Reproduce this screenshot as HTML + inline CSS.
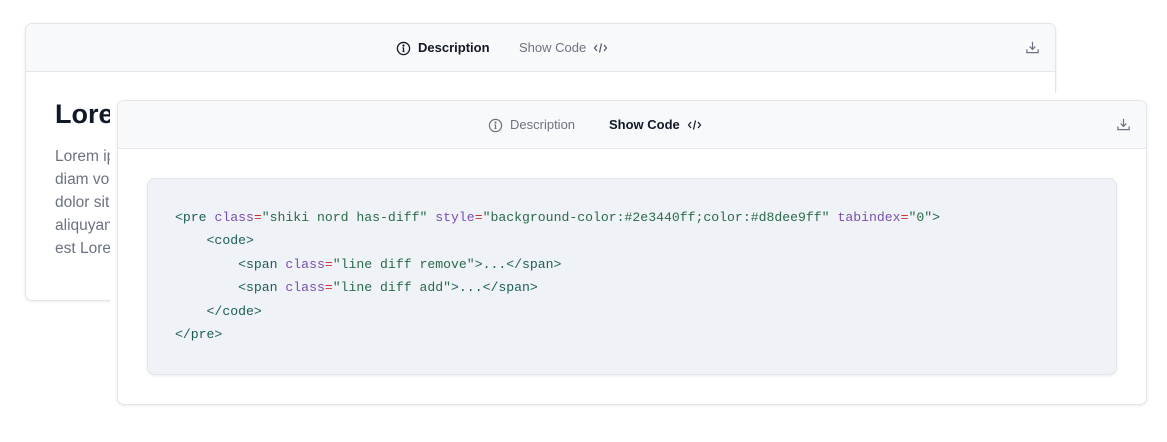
<!DOCTYPE html>
<html><head><style>
*{box-sizing:border-box;margin:0;padding:0}
body{width:1167px;height:442px;background:#fff;position:relative;overflow:hidden;font-family:"Liberation Sans",sans-serif}
.card{position:absolute;background:#fff;border:1px solid #e3e5e8;border-radius:7px;box-shadow:0 1px 3px rgba(0,0,0,.08);overflow:hidden}
.hdr{position:absolute;left:0;right:0;top:0;height:48px;background:#f8f9fa;border-bottom:1px solid #e5e7eb}
.tab{position:absolute;top:16px;font-size:13px;line-height:16px;color:#6b7280;display:flex;align-items:center;gap:7px;white-space:nowrap}
.tab.on{color:#111827;font-weight:bold}
.dl{position:absolute;top:16px}
pre{font-family:"Liberation Mono",monospace;font-size:13.15px;line-height:23.4px;color:#1d5f58}
.a{color:#7a4fb0}.e{color:#d03030}.s{color:#2b6a4a}
</style></head><body>
<div class="card" style="left:25px;top:23px;width:1031px;height:278px">
 <div class="hdr">
  <div class="tab on" style="left:370px"><svg width="15" height="15" viewBox="0 0 16 16" fill="none" stroke="#111827" stroke-width="1.4"><circle cx="8" cy="8" r="6.5"/><path d="M8 7v4.2M7 11.2h2M7 7h1"/><circle cx="8" cy="4.8" r=".5" fill="#111827"/></svg>Description</div>
  <div class="tab" style="left:493px">Show Code <svg width="15" height="12" viewBox="0 0 15 12" fill="none" stroke="#4b5563" stroke-width="1.2"><path d="M4 3L1.5 6 4 9M11 3l2.5 3L11 9M8.5 1.5l-2 9"/></svg></div>
  <svg class="dl" style="left:999px" width="15" height="15" viewBox="0 0 16 16" fill="none" stroke="#6b7280" stroke-width="1.3"><path d="M8 2v8M5 7l3 3 3-3M2 10v3.5h12V10"/></svg>
 </div>
 <div style="position:absolute;left:29px;top:75px;font-size:27px;font-weight:bold;color:#111827">Lore</div>
 <div style="position:absolute;left:29px;top:121px;width:900px;font-size:15.5px;line-height:23px;color:#6b7280">Lorem ip<br>diam vol<br>dolor sit<br>aliquyam<br>est Lore</div>
</div>
<div style="position:absolute;left:110px;top:93px;width:1057px;height:330px;background:#fff"></div>
<div class="card" style="left:117px;top:100px;width:1030px;height:305px">
 <div class="hdr">
  <div class="tab" style="left:370px"><svg width="15" height="15" viewBox="0 0 16 16" fill="none" stroke="#6b7280" stroke-width="1.3"><circle cx="8" cy="8" r="6.5"/><path d="M8 7v4.2M7 11.2h2M7 7h1"/><circle cx="8" cy="4.8" r=".5" fill="#6b7280"/></svg>Description</div>
  <div class="tab on" style="left:491px">Show Code <svg width="15" height="12" viewBox="0 0 15 12" fill="none" stroke="#111827" stroke-width="1.2"><path d="M4 3L1.5 6 4 9M11 3l2.5 3L11 9M8.5 1.5l-2 9"/></svg></div>
  <svg class="dl" style="left:998px" width="15" height="15" viewBox="0 0 16 16" fill="none" stroke="#6b7280" stroke-width="1.3"><path d="M8 2v8M5 7l3 3 3-3M2 10v3.5h12V10"/></svg>
 </div>
 <div style="position:absolute;left:29px;top:77px;width:970px;height:197px;background:#eff2f6;border:1px solid #e2e5ea;border-radius:8px;box-shadow:0 1px 3px rgba(0,0,0,.08)">
<pre style="position:absolute;left:27px;top:27px">&lt;pre <span class="a">class</span><span class="e">=</span><span class="s">"shiki nord has-diff"</span> <span class="a">style</span><span class="e">=</span><span class="s">"background-color:#2e3440ff;color:#d8dee9ff"</span> <span class="a">tabindex</span><span class="e">=</span><span class="s">"0"</span>&gt;
    &lt;code&gt;
        &lt;span <span class="a">class</span><span class="e">=</span><span class="s">"line diff remove"</span>&gt;...&lt;/span&gt;
        &lt;span <span class="a">class</span><span class="e">=</span><span class="s">"line diff add"</span>&gt;...&lt;/span&gt;
    &lt;/code&gt;
&lt;/pre&gt;</pre>
 </div>
</div>
</body></html>
